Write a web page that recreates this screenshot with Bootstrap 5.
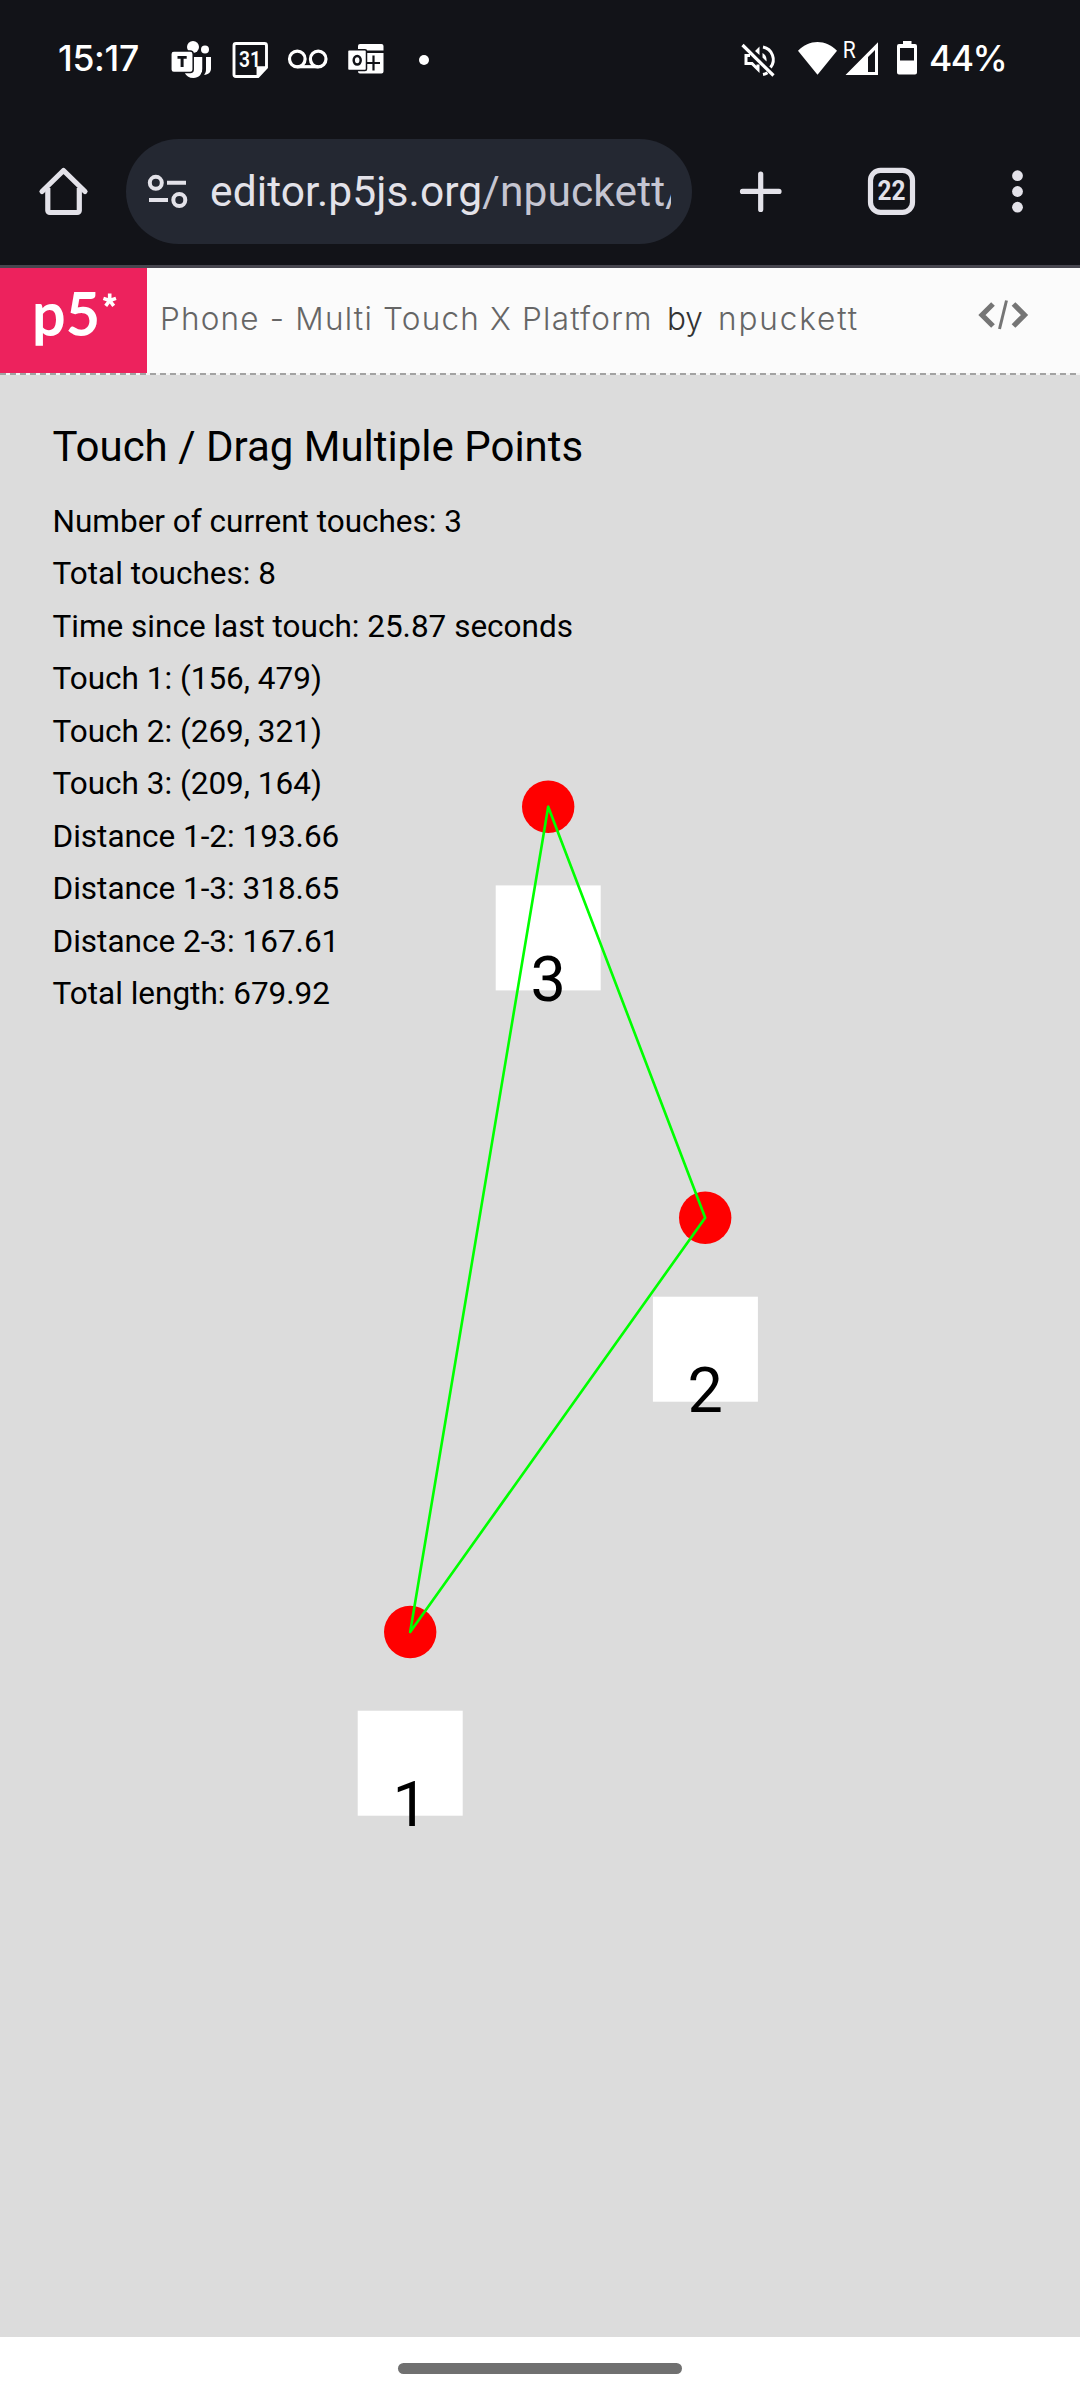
<!DOCTYPE html>
<html lang="en">
<head>
<meta charset="utf-8">
<meta name="viewport" content="width=device-width, initial-scale=1">
<title>Phone - Multi Touch X Platform</title>
<link href="https://cdn.jsdelivr.net/npm/bootstrap@5.3.0/dist/css/bootstrap.min.css" rel="stylesheet">
<style>
body{width:1080px;height:2400px;overflow:hidden;background:#fff;font-family:Roboto,sans-serif;color:#000}
svg{display:block;flex:none}
.statusbar{height:120px;background:#121318;padding-left:58px;padding-right:75px}
.statustext{font-family:Inter,sans-serif;font-weight:500;font-size:35.5px;line-height:118px;color:#fff;white-space:nowrap}
.clock{width:112px;letter-spacing:-.3px}
.charge{width:76px;letter-spacing:-1.5px}
.toolbar{height:148px;background:#121318;border-bottom:3px solid #47464f;padding:19px 0 0}
.omnibox{width:566px;height:105px;background:#242832;margin-left:36px;padding-left:20px;padding-right:21px}
.address{font-size:42.5px;line-height:105px;color:#e3e2e9;margin-left:20px;height:105px;letter-spacing:.1px;white-space:nowrap}
.address .path{color:#c5c5d1}
.sketchnav{height:107px;background:#fbfbfb}
.sketchnav::after{content:"";position:absolute;left:0;right:0;bottom:0;height:2px;background:repeating-linear-gradient(90deg,#a3a3a3 0 6px,#f4f4f4 6px 10px)}
.brand{width:147px;height:106px;background:#ed225d}
.sketchtitle{font-family:Inter,sans-serif;font-weight:300;font-size:31.5px;line-height:102px;color:#666;white-space:nowrap}
.sketchtitle .name{width:507px;margin-left:13px;letter-spacing:1.2px}
.sketchtitle .by{width:51px;color:#333}
.sketchtitle .author{letter-spacing:1.9px}
.stage{height:1962px;background:#dcdcdc;padding:46.600px 0 0 52.5px}
.stage h1{font-size:42px;line-height:50px;font-weight:400;margin:0 0 24px}
.stage li{font-size:31.5px;line-height:52.5px}
.plot{left:0;top:0}
.homebar{height:63px;padding-top:26px}
.homebar span{width:284px;height:11px;background:#707070}
</style>
<script src="https://cdn.jsdelivr.net/npm/bootstrap@5.3.0/dist/js/bootstrap.bundle.min.js"></script>
</head>
<body>
<header class="statusbar d-flex align-items-start">
  <span class="statustext clock">15:17</span>
  <svg width="262" height="120" viewBox="170 0 262 120" fill="#fff">
    <!-- Teams -->
    <circle cx="193" cy="47" r="6"/><circle cx="205" cy="49.5" r="4"/>
    <path d="M201.500 57H211v11.500c0 4-3 6.500-7 6.300 2-2 2-4 2-6V57"/>
    <path d="M185 57h17.500v12c0 5-4 9-9 9-4.500 0-7.500-2-9-5.500z"/>
    <path d="M203.200 57v12c0 2.500-.8 4-2 5.800" fill="none" stroke="#121318" stroke-width="1.400"/>
    <rect x="170.800" y="51" width="22.400" height="21.400" rx="3" stroke="#121318" stroke-width="1.500"/>
    <path d="M177.500 56h9.200v2.800H183.600V67h-3V58.800h-3.100z" fill="#121318"/>
    <!-- Calendar -->
    <path d="M236 43.500h28.500a2 2 0 0 1 2 2V67.500l-8.500 9H236a2 2 0 0 1-2-2v-29a2 2 0 0 1 2-2zM258 76v-8.300h8" fill="none" stroke="#fff" stroke-width="2.900"/>
    <path d="M258 68h8l-8 8z"/>
    <text x="250" y="67" font-family="Roboto,sans-serif" font-size="22" font-weight="600" text-anchor="middle" textLength="22" lengthAdjust="spacingAndGlyphs">31</text>
    <!-- Voicemail -->
    <g fill="none" stroke="#fff" stroke-width="3.200"><circle cx="297.300" cy="59" r="7.800"/><circle cx="318.200" cy="59" r="7.800"/><path d="M297.300 66.700h21"/></g>
    <!-- Outlook -->
    <path d="M360 44h21.500a2 2 0 0 1 2 2v4.500H358V46a2 2 0 0 1 2-2zM358 53h25.500v18.500a2 2 0 0 1-2 2H360a2 2 0 0 1-2-2z"/>
    <path d="M373.500 55.500v15M367 63h13" stroke="#121318" stroke-width="2.200"/>
    <rect x="347.500" y="49.800" width="19" height="20.600" rx="1.500" stroke="#121318" stroke-width="1.500"/>
    <ellipse cx="357.200" cy="60.300" rx="3.500" ry="4.300" fill="none" stroke="#121318" stroke-width="2.500"/>
    <circle cx="424" cy="60" r="5"/>
  </svg>
  <svg class="ms-auto" width="189" height="120" viewBox="740 0 189 120" fill="#fff">
    <!-- Muted volume -->
    <g fill="none" stroke="#fff" stroke-width="3">
      <path d="M763 47a12.800 12.800 0 0 1 7.500 20.500M763 74.500q2.500-.5 4.500-1.800"/>
      <path d="M750 55.500h-4v8h6l6 6v-5"/>
    </g>
    <path d="M755 51l4.500-4.500V55zM762.500 53c3 1.500 4.500 4.500 4 8.500l-4-4z"/>
    <path d="M742.500 45l31 30.500" stroke="#fff" stroke-width="3.200"/>
    <!-- Wi-Fi -->
    <path d="M798 50.800C809 39.200 826 39.200 837 50.800L817.500 74.800z"/>
    <!-- Mobile signal -->
    <path fill-rule="evenodd" d="M845.500 75L878 42.300V75zM868 57v15h7V50z"/>
    <text x="842.800" y="58.300" font-family="Roboto,sans-serif" font-size="23" textLength="13" lengthAdjust="spacingAndGlyphs">R</text>
    <!-- Battery -->
    <path fill-rule="evenodd" d="M903 44v-3h8.500v3H915a2 2 0 0 1 2 2v26.500a2 2 0 0 1-2 2h-16a2 2 0 0 1-2-2V46a2 2 0 0 1 2-2zM900 48v12.500h14V48z"/>
  </svg>
  <span class="statustext charge">44%</span>
</header>

<nav class="toolbar d-flex">
  <svg width="90" height="105" viewBox="0 139 90 105" fill="none" stroke="#e3e2e9" stroke-width="5.200">
    <path d="M42 191.500L63.500 170.500L85 191.500" stroke-linecap="round" stroke-linejoin="round"/><path d="M47.800 188v22.500a2 2 0 0 0 2 2h27.500a2 2 0 0 0 2-2V188"/>
  </svg>
  <div class="omnibox rounded-pill d-flex">
    <svg width="44" height="105" viewBox="146 139 44 105" fill="none" stroke="#e3e2e9" stroke-width="4">
      <circle cx="155.800" cy="182.800" r="6"/><circle cx="179.300" cy="200" r="6"/><path d="M167 182.800h19M149 200h19"/>
    </svg>
    <div class="address overflow-hidden flex-grow-1">editor.p5js.org<span class="path">/npuckett/</span></div>
  </div>
  <svg width="388" height="105" viewBox="692 139 388 105" fill="#e3e2e9">
    <path d="M760.700 174v35.500M742.500 191.400h36.500" stroke="#e3e2e9" stroke-width="5.200" stroke-linecap="round"/>
    <rect x="870.500" y="170.300" width="42" height="42" rx="10" fill="none" stroke="#e3e2e9" stroke-width="5.200"/>
    <text x="891.500" y="200" font-family="Roboto,sans-serif" font-size="27" font-weight="700" text-anchor="middle" textLength="28" lengthAdjust="spacingAndGlyphs">22</text>
    <circle cx="1017.500" cy="175.700" r="5.400"/><circle cx="1017.500" cy="191.500" r="5.400"/><circle cx="1017.500" cy="207.200" r="5.400"/>
  </svg>
</nav>

<section class="sketchnav position-relative d-flex">
  <div class="brand">
    <svg width="147" height="106" viewBox="0 268 147 106" fill="#fff">
      <text x="32" y="336" font-family="Lato,sans-serif" font-size="60.500" font-weight="700" textLength="68" lengthAdjust="spacingAndGlyphs">p5</text>
      <path d="M109.700 300.500V293.500M109.700 300.500l6.300-2.100M109.700 300.500l4 5.300M109.700 300.500l-4 5.300M109.700 300.500l-6.300-2.100" stroke="#fff" stroke-width="3.600"/>
    </svg>
  </div>
  <div class="sketchtitle d-flex">
    <span class="name">Phone - Multi Touch X Platform</span><span class="by">by</span><span class="author">npuckett</span>
  </div>
  <svg class="ms-auto" width="110" height="105" viewBox="970 268 110 105" fill="none" stroke="#757575">
    <path d="M993 304L982 315l11 11M1013.500 304l11 11-11 11" stroke-width="5.200"/><path d="M1006.500 300.500L999.500 329" stroke-width="3"/>
  </svg>
</section>

<main class="stage position-relative">
  <h1>Touch / Drag Multiple Points</h1>
  <ul class="list-unstyled mb-0">
    <li>Number of current touches: 3</li>
    <li>Total touches: 8</li>
    <li>Time since last touch: 25.87 seconds</li>
    <li>Touch 1: (156, 479)</li>
    <li>Touch 2: (269, 321)</li>
    <li>Touch 3: (209, 164)</li>
    <li>Distance 1-2: 193.66</li>
    <li>Distance 1-3: 318.65</li>
    <li>Distance 2-3: 167.61</li>
    <li>Total length: 679.92</li>
  </ul>
  <svg class="plot position-absolute" width="1080" height="1962" viewBox="0 375 1080 1962">
    <g fill="#f00"><circle cx="410.200" cy="1632" r="26.200"/><circle cx="705.200" cy="1217.800" r="26.200"/><circle cx="548.200" cy="806.700" r="26.200"/></g>
    <g fill="#fff"><rect x="357.700" y="1710.700" width="105" height="105"/><rect x="652.900" y="1296.700" width="105" height="105"/><rect x="495.700" y="885.400" width="105" height="105"/></g>
    <g font-family="Roboto,sans-serif" font-size="63" text-anchor="middle"><text x="410.200" y="1826">1</text><text x="705.200" y="1412">2</text><text x="548.200" y="1001.300">3</text></g>
    <path d="M410.200 1632L705.200 1217.800L548.200 806.700z" fill="none" stroke="#0f0" stroke-width="2.625" stroke-linejoin="round"/>
  </svg>
</main>

<footer class="homebar d-flex justify-content-center bg-white"><span class="rounded-pill"></span></footer>
</body>
</html>
